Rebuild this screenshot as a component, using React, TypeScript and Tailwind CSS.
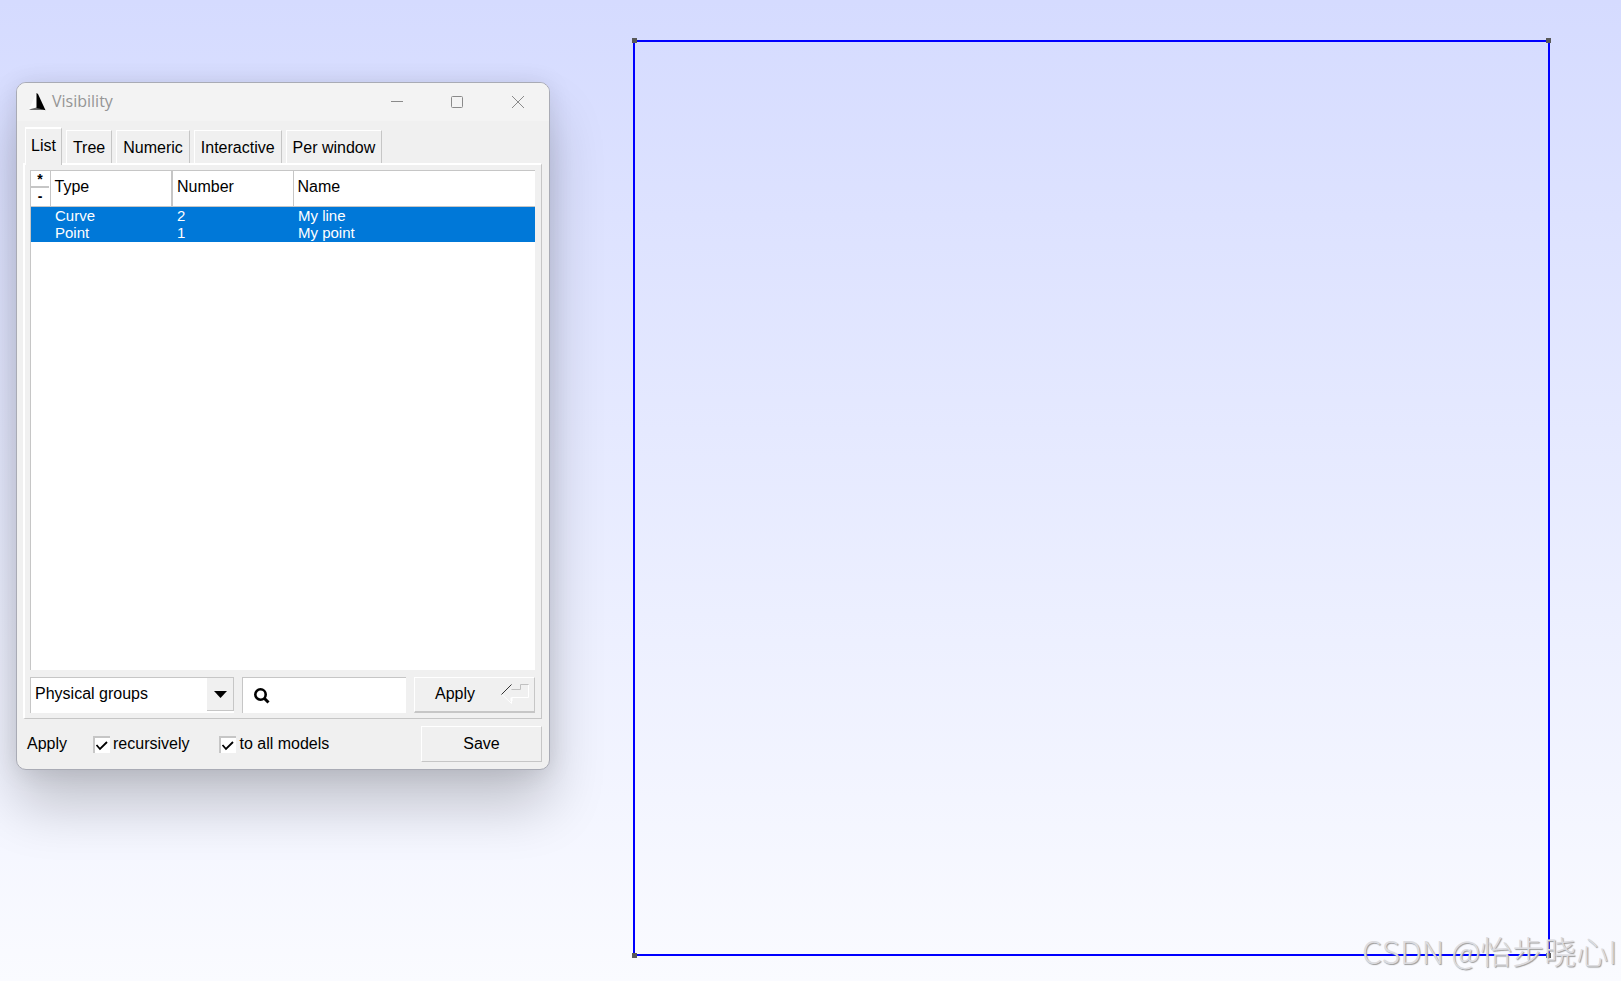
import type { ReactNode } from "react";
import { useState } from "react";

const tabs = ["List", "Tree", "Numeric", "Interactive", "Per window"];

const rows = [
  { type: "Curve", number: 2, name: "My line" },
  { type: "Point", number: 1, name: "My point" },
];

function TitleBar() {
  return (
    <header className="flex h-[38px] items-center bg-[#f3f3f3] pl-3">
      <svg width="17" height="18" viewBox="0 0 17 18" aria-hidden="true">
        <path d="M7.500 0 L0 16 L7.500 15 Z" fill="#fdfdfd" />
        <path d="M0 16.500 L7.500 14.500 L16.500 17 L2 17 Z" fill="#6a6a6a" />
        <path d="M7.500 0 L9 1 L16.500 17.200 L7.500 15 Z" fill="#000" />
      </svg>
      <h1 className="ml-1.5 flex-1 pb-0.5 font-['Open_Sans',sans-serif] text-[16px] leading-5 text-[#959595]">Visibility</h1>
      <button type="button" aria-label="Minimize" className="flex h-full w-[60px] items-center justify-center">
        <svg width="12" height="12" viewBox="0 0 12 12" stroke="#8a8a8a" fill="none">
          <path d="M0 5.5H12" />
        </svg>
      </button>
      <button type="button" aria-label="Maximize" className="flex h-full w-[60px] items-center justify-center">
        <svg width="12" height="12" viewBox="0 0 12 12" stroke="#8a8a8a" fill="none">
          <rect x="0.5" y="0.5" width="11" height="11" rx="1" />
        </svg>
      </button>
      <button type="button" aria-label="Close" className="flex h-full w-[62px] items-center justify-center">
        <svg width="12" height="12" viewBox="0 0 12 12" stroke="#8a8a8a" fill="none">
          <path d="M0 0L12 12M12 0L0 12" />
        </svg>
      </button>
    </header>
  );
}

function EntityTable() {
  return (
    <div className="h-[500px] border-l border-t border-[#c6c6c6] bg-white">
      <table className="w-full table-fixed border-collapse text-left">
        <colgroup>
          <col className="w-[19px]" />
          <col className="w-[122px]" />
          <col className="w-[121px]" />
          <col />
        </colgroup>
        <thead>
          <tr className="h-[35px] border-b border-[#c6c6c6]">
            <th className="p-0 align-top text-[14px]">
              <button type="button" aria-label="Select all" className="block h-[17px] w-[18px] border-b-2 border-[#c6c6c6] text-center leading-[17px]">
                *
              </button>
              <button type="button" aria-label="Invert selection" className="block h-[17px] w-[18px] text-center leading-[17px]">
                -
              </button>
            </th>
            <th className="border-l border-[#c6c6c6] p-0 pb-0.5 pl-1 font-normal">Type</th>
            <th className="border-l-2 border-[#c6c6c6] p-0 pb-0.5 pl-1 font-normal">Number</th>
            <th className="border-l border-[#c6c6c6] p-0 pb-0.5 pl-1 font-normal">Name</th>
          </tr>
        </thead>
        <tbody className="border-b border-[#0078d8] bg-[#0078d8] text-[15px] leading-[17px] text-white">
          {rows.map((r) => (
            <tr key={r.type}>
              <td className="p-0" />
              <td className="p-0 pl-[5px]">{r.type}</td>
              <td className="p-0 pl-[5px]">{r.number}</td>
              <td className="p-0 pl-[5px]">{r.name}</td>
            </tr>
          ))}
        </tbody>
      </table>
    </div>
  );
}

function Check({ children }: { children: ReactNode }) {
  return (
    <label className="flex items-center gap-[3px]">
      <span className="grid size-[17px]">
        <input
          type="checkbox"
          defaultChecked
          className="size-[17px] appearance-none border-l-2 border-t-2 border-[#c6c6c6] bg-white [grid-area:1/1]"
        />
        <svg className="pointer-events-none [grid-area:1/1]" width="17" height="17" viewBox="0 0 17 17" fill="none" stroke="#000" strokeWidth="1.8">
          <path d="M3.5 9L7 13L14 6" />
        </svg>
      </span>
      {children}
    </label>
  );
}

function VisibilityWindow() {
  const [active, setActive] = useState("List");

  return (
    <section className="mt-[42px] w-[534px] shrink-0 overflow-hidden rounded-[10px] border border-[#a9abb5] bg-[#f0f0f0] shadow-[0_36px_56px_rgba(0,0,0,0.2),0_2px_24px_rgba(0,0,0,0.1)]">
      <TitleBar />
      <div className="pb-[7px] pl-1.5 pr-[7px] pt-1.5">
        <nav className="flex items-end gap-1 pl-0.5">
          {tabs.map((t) => (
            <button
              key={t}
              type="button"
              onClick={() => setActive(t)}
              className={
                t === active
                  ? "-mb-0.5 h-[38px] border-l border-t-2 border-l-white border-r border-r-[#c6c6c6] border-t-white bg-[#f0f0f0] px-[5px] pb-0.5"
                  : "h-[33px] border-l border-r border-t border-l-white border-r-[#c6c6c6] border-t-white px-[6px] pt-0.5"
              }
            >
              {t}
            </button>
          ))}
        </nav>
        <div className="border-b border-l-2 border-r border-t-2 border-b-[#c6c6c6] border-l-white border-r-[#c6c6c6] border-t-white pb-[5px] pl-[5px] pr-1.5 pt-[5px]">
          <EntityTable />
          <form className="mt-[7px] flex h-9 gap-2" onSubmit={(e) => e.preventDefault()}>
            <div className="grid w-[204px]">
              <select
                aria-label="Entities"
                className="h-9 w-full appearance-none border-l border-t border-[#c6c6c6] bg-white pb-1 pl-1 [grid-area:1/1]"
              >
                <option>Physical groups</option>
                <option>Elementary entities</option>
              </select>
              <span className="pointer-events-none mt-px flex h-[33px] w-[27px] items-center justify-center justify-self-end border-b border-r border-[#c6c6c6] bg-[#f0f0f0] [grid-area:1/1]">
                <svg width="13" height="7" viewBox="0 0 13 7">
                  <path d="M0 0H13L6.500 7Z" />
                </svg>
              </span>
            </div>
            <label className="flex w-[164px] items-center border-l border-t border-[#c6c6c6] bg-white pl-2.5">
              <svg width="17" height="17" viewBox="0 0 17 17" fill="none" stroke="#000" strokeWidth="2.600">
                <circle cx="7.500" cy="7.500" r="5.200" />
                <path d="M11 11L15.500 15.500" strokeWidth="3" />
              </svg>
              <input type="text" aria-label="Search" className="min-w-0 flex-1 pl-2 outline-none" />
            </label>
            <button
              type="submit"
              className="flex flex-1 items-center border-b-2 border-l border-r border-t border-b-[#c6c6c6] border-l-white border-r-[#c6c6c6] border-t-white pb-0.5 pl-5"
            >
              Apply
              <svg className="ml-auto mr-1" width="29" height="20" viewBox="0 0 29 20" fill="none">
                <path d="M10.500 15.500V19.500L1 10.500" stroke="#fff" />
                <path d="M10.500 13.500H27.500V1" stroke="#fff" />
                <path d="M10.500 13.500V17" stroke="#fff" strokeWidth="2" />
                <path d="M27.500 0.500H19.500V5.500H10.500" stroke="#c0c0c0" />
                <path d="M0.500 10.500L10.500 0.500" stroke="#333" />
              </svg>
            </button>
          </form>
        </div>
        <div className="mt-[7px] flex items-center pl-1">
          <span className="w-[66px]">Apply</span>
          <div className="flex items-center gap-[30px]">
            <Check>recursively</Check>
            <Check>to all models</Check>
          </div>
          <button
            type="button"
            className="ml-auto h-9 w-[121px] border border-b-[#c6c6c6] border-l-white border-r-[#c6c6c6] border-t-white"
          >
            Save
          </button>
        </div>
      </div>
    </section>
  );
}

function Geometry() {
  return (
    <div className="relative flex-1 self-stretch border-2 border-[#0000ff]">
      <i className="absolute -left-[3px] -top-1 size-[5px] bg-[#595959]" />
      <i className="absolute -right-[3px] -top-1 size-[5px] bg-[#595959]" />
      <i className="absolute -bottom-1 -left-[3px] size-[5px] bg-[#595959]" />
      <i className="absolute -bottom-1 -right-[3px] size-[5px] bg-[#595959]" />
    </div>
  );
}

export default function App() {
  return (
    <main className="relative flex min-h-screen items-start gap-[83px] overflow-hidden bg-linear-to-b from-[#d5dbff] to-[#fafbff] pb-[25px] pl-4 pr-[71px] pt-10 font-['Liberation_Sans',Arial,sans-serif] text-base leading-5 text-black">
      <VisibilityWindow />
      <Geometry />
      <p className="absolute bottom-2 right-1 whitespace-nowrap font-['Noto_Sans_CJK_SC',sans-serif] text-[32px] font-light leading-[46px] text-[#dcdce0] [text-shadow:1px_1px_1px_#999]">
        CSDN @怡步晓心I
      </p>
    </main>
  );
}
